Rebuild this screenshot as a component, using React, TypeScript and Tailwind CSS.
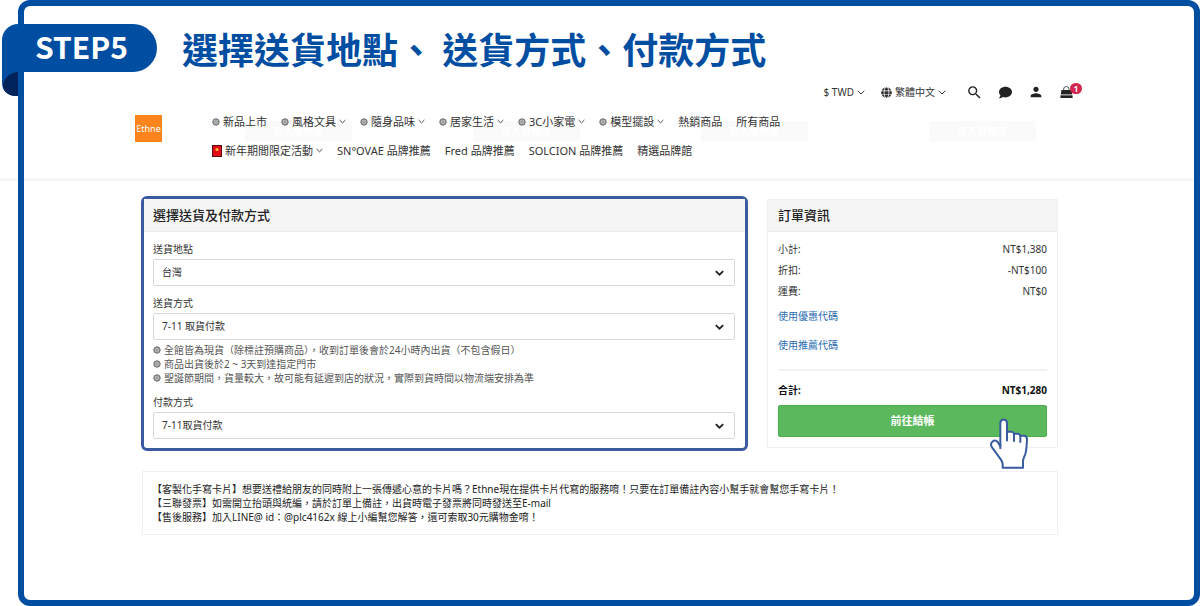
import { FaComment, FaGlobe } from "react-icons/fa";
import { MdPerson, MdSearch } from "react-icons/md";

type NavItem = { label: string; icon?: "dot" | "envelope"; menu?: boolean };

const navItems: NavItem[] = [
  { label: "新品上市", icon: "dot" },
  { label: "風格文具", icon: "dot", menu: true },
  { label: "隨身品味", icon: "dot", menu: true },
  { label: "居家生活", icon: "dot", menu: true },
  { label: "3C小家電", icon: "dot", menu: true },
  { label: "模型擺設", icon: "dot", menu: true },
  { label: "熱銷商品" },
  { label: "所有商品" },
  { label: "新年期間限定活動", icon: "envelope", menu: true },
  { label: "SN°OVAE 品牌推薦" },
  { label: "Fred 品牌推薦" },
  { label: "SOLCION 品牌推薦" },
  { label: "精選品牌館" },
];

const deliveryNotes = [
  "全館皆為現貨（除標註預購商品），收到訂單後會於24小時內出貨（不包含假日）",
  "商品出貨後於2 ~ 3天到達指定門市",
  "聖誕節期間，貨量較大，故可能有延遲到店的狀況，實際到貨時間以物流端安排為準",
];

const summary = [
  { label: "小計:", value: "NT$1,380" },
  { label: "折扣:", value: "-NT$100" },
  { label: "運費:", value: "NT$0" },
];

const storeNotes = [
  "【客製化手寫卡片】想要送禮給朋友的同時附上一張傳遞心意的卡片嗎？Ethne現在提供卡片代寫的服務唷！只要在訂單備註內容小幫手就會幫您手寫卡片！",
  "【三聯發票】如需開立抬頭與統編，請於訂單上備註，出貨時電子發票將同時發送至E-mail",
  "【售後服務】加入LINE@ id：@plc4162x 線上小編幫您解答，還可索取30元購物金唷！",
];

const Chevron = ({ className }: { className: string }) => (
  <svg viewBox="0 0 8 5" className={className} fill="none" stroke="currentColor" aria-hidden="true">
    <path d="M0.7 0.8 4 4l3.3-3.2" />
  </svg>
);

const Dot = () => (
  <svg viewBox="0 0 8 8" className="size-2 shrink-0" aria-hidden="true">
    <circle cx="4" cy="4" r="3.2" fill="#b4b4b4" stroke="#666" />
    <circle cx="4" cy="4" r="1.6" fill="#a2a2a2" />
  </svg>
);

const Envelope = () => (
  <svg viewBox="0 0 10 12" className="h-3 w-2.5 shrink-0" aria-hidden="true">
    <rect x="0.5" y="0.5" width="9" height="11" fill="#e00b16" stroke="#5c0d10" />
    <circle cx="5" cy="4.5" r="1.5" fill="#f8c331" />
  </svg>
);

const Bag = () => (
  <svg viewBox="0 0 13 14" className="h-3.5 w-[13px]" aria-hidden="true">
    <path d="M3.6 6V4.2a2.7 2.7 0 0 1 5.4 0V6" fill="none" stroke="#555" />
    <path d="M1.4 5h10.2l.5 4H.9z" fill="#222" />
    <path d="M.9 9h11.2l.2 1.6H.7z" fill="#999" />
    <path d="M.4 10.4h12.2V13H.4z" fill="#222" />
  </svg>
);

const Hand = () => (
  <svg
    viewBox="0 0 117 153"
    className="pointer-events-none absolute top-[13px] right-[18px] h-[51px] w-[39px]"
    fill="#fff"
    stroke="#3a5ba0"
    strokeWidth="6"
    strokeLinejoin="round"
    aria-hidden="true"
  >
    <path d="M38 149v-10c0-8-4-13-10-21L6 88c-9-15 8-26 17-16l8 13V15c0-14 20-14 20 0v26h13c5 0 7 3 8 6h11c5 0 7 3 8 6h11c7 0 9 4 9 11-1 18-1 30-5 44-3 9-7 13-7 22v19z" />
    <path d="M31 80v13M51 40v30M72 46v25M91 52v22" fill="none" />
  </svg>
);

const StepBanner = () => (
  <div className="flex items-start gap-[25px] pt-6 pl-0.5 font-['Noto_Sans_CJK_TC',sans-serif] font-bold">
    <div className="relative z-20">
      <div className="flex h-12 w-[155px] items-center rounded-tl-2xl rounded-r-3xl bg-[#004ea2] pb-1 pl-[33px] text-[30px] leading-none text-white">
        STEP5
      </div>
      <svg viewBox="0 0 16 24" className="absolute top-full left-0 h-6 w-4" aria-hidden="true">
        <path d="M0 0h16v24h-2C6 24 0 19 0 11z" fill="#004ea2" />
        <path d="M16 0v24h-2C6 24 1 19 1 13S8 0 16 0z" fill="#00235c" />
      </svg>
    </div>
    <h1 className="h-12 text-4xl leading-[48px] text-[#004ea2]">選擇送貨地點、 送貨方式、付款方式</h1>
  </div>
);

const SiteHeader = () => (
  <header className="relative border-b-3 border-[#f7f7f7] pb-[13px] text-[#333]">
    {/* product card buttons showing faintly through the header */}
    <div className="absolute inset-x-0 top-[49px] flex justify-center gap-[121px] pl-20">
      {[0, 1, 2, 3].map((n) => (
        <button key={n} disabled className="h-[21px] w-[107px] rounded-xs bg-[#fafafa] text-[10px] font-bold text-white">
          加入購物車
        </button>
      ))}
    </div>

    <div className="relative mx-auto w-full max-w-[946px] pt-2.5 pl-2">
      <div className="flex h-5 items-center justify-end text-[10px]">
        <button className="flex items-center gap-[3px]">
          $ TWD
          <Chevron className="h-[5px] w-2" />
        </button>
        <button className="ml-4 flex items-center gap-[3px]">
          <FaGlobe className="size-[11px]" />
          繁體中文
          <Chevron className="h-[5px] w-2" />
        </button>
        <div className="ml-5 flex items-center gap-4 text-[#222]">
          <button aria-label="搜尋">
            <MdSearch className="size-[17px]" />
          </button>
          <button aria-label="訊息">
            <FaComment className="size-[13px]" />
          </button>
          <button aria-label="會員">
            <MdPerson className="size-4" />
          </button>
          <button aria-label="購物車" className="relative">
            <Bag />
            <span className="absolute -top-0.5 left-2.5 flex h-[11px] w-3 items-center justify-center rounded-full bg-[#d0264f] text-[8px] font-bold text-white">
              1
            </span>
          </button>
        </div>
      </div>

      <div className="mt-[5px] flex items-start gap-[50px]">
        <a href="#" className="mt-2 flex size-[27px] shrink-0 items-center justify-center bg-[#fb841c] text-[9px] text-white">
          Ethne
        </a>
        <nav className="flex max-w-[640px] flex-wrap gap-x-3.5 text-[11px] leading-[29px]">
          {navItems.map((item) => (
            <a key={item.label} href="#" className="flex items-center gap-[3px] whitespace-nowrap">
              {item.icon === "dot" && <Dot />}
              {item.icon === "envelope" && <Envelope />}
              {item.label}
              {item.menu && <Chevron className="h-[5px] w-[7px]" />}
            </a>
          ))}
        </nav>
      </div>
    </div>
  </header>
);

const SelectField = ({ id, label, value }: { id: string; label: string; value: string }) => (
  <div>
    <label htmlFor={id} className="mb-[3px] block leading-[14px]">
      {label}
    </label>
    <div className="relative">
      <select id={id} className="block h-[27px] w-full appearance-none rounded-xs border border-[#d8d8d8] bg-white pl-2">
        <option>{value}</option>
      </select>
      <Chevron className="pointer-events-none absolute top-[11px] right-[11px] h-1.5 w-[9px] stroke-[1.6] text-[#222]" />
    </div>
  </div>
);

const DeliveryPanel = () => (
  <section className="rounded-md border-3 border-[#3a5ba0] text-[10px] text-[#333]">
    <h2 className="h-[33px] border-b border-[#ececec] bg-[#f5f5f5] px-[9px] text-[13px] leading-8 font-medium text-[#222]">
      選擇送貨及付款方式
    </h2>
    <div className="flex flex-col gap-2.5 pt-2.5 pr-2.5 pb-[9px] pl-[9px]">
      <SelectField id="location" label="送貨地點" value="台灣" />
      <div>
        <SelectField id="delivery" label="送貨方式" value="7-11 取貨付款" />
        <ul className="mt-[3px] leading-[14px] text-[#555]">
          {deliveryNotes.map((note) => (
            <li key={note} className="flex items-center gap-[3px]">
              <Dot />
              {note}
            </li>
          ))}
        </ul>
      </div>
      <SelectField id="payment" label="付款方式" value="7-11取貨付款" />
    </div>
  </section>
);

const OrderPanel = () => (
  <section className="mt-[3px] border border-[#f0f0f0] text-[10px] text-[#333]">
    <h2 className="h-8 border-b border-[#ececec] bg-[#f5f5f5] px-2.5 text-[13px] leading-[30px] font-medium text-[#222]">
      訂單資訊
    </h2>
    <div className="px-2.5 pt-[7px] pb-2.5">
      {summary.map((row) => (
        <div key={row.label} className="flex justify-between leading-[21px]">
          <span>{row.label}</span>
          <span>{row.value}</span>
        </div>
      ))}
      <a href="#" className="block leading-[29px] text-[#2a6cb0]">
        使用優惠代碼
      </a>
      <a href="#" className="block leading-[29px] text-[#2a6cb0]">
        使用推薦代碼
      </a>
      <hr className="my-[9px] border-t-2 border-[#f3f3f3]" />
      <div className="flex justify-between leading-[21px] font-bold text-[#111]">
        <span>合計:</span>
        <span>NT$1,280</span>
      </div>
      <div className="relative mt-1">
        <button className="h-8 w-full rounded-xs border border-[#4cae4c] bg-[#5cb85c] text-[11px] font-bold text-white">
          前往結帳
        </button>
        <Hand />
      </div>
    </div>
  </section>
);

export default function App() {
  return (
    <div className="relative min-h-screen bg-white font-['Noto_Sans','Noto_Sans_CJK_TC',sans-serif]" lang="zh-Hant">
      <div className="pointer-events-none absolute inset-y-0 right-0 left-[18px] z-10 rounded-xl border-6 border-[#004ea2]" />
      <StepBanner />
      <SiteHeader />
      <main className="mx-auto w-full max-w-[918px] pt-[15px] pr-px pb-12">
        <div className="grid grid-cols-[minmax(0,1fr)_291px] items-start gap-[19px]">
          <DeliveryPanel />
          <OrderPanel />
        </div>
        <div className="mt-5 ml-px border border-[#f0f0f0] px-[9px] py-2.5 text-[10px] leading-[14px] text-[#222]">
          {storeNotes.map((note) => (
            <p key={note}>{note}</p>
          ))}
        </div>
      </main>
    </div>
  );
}
